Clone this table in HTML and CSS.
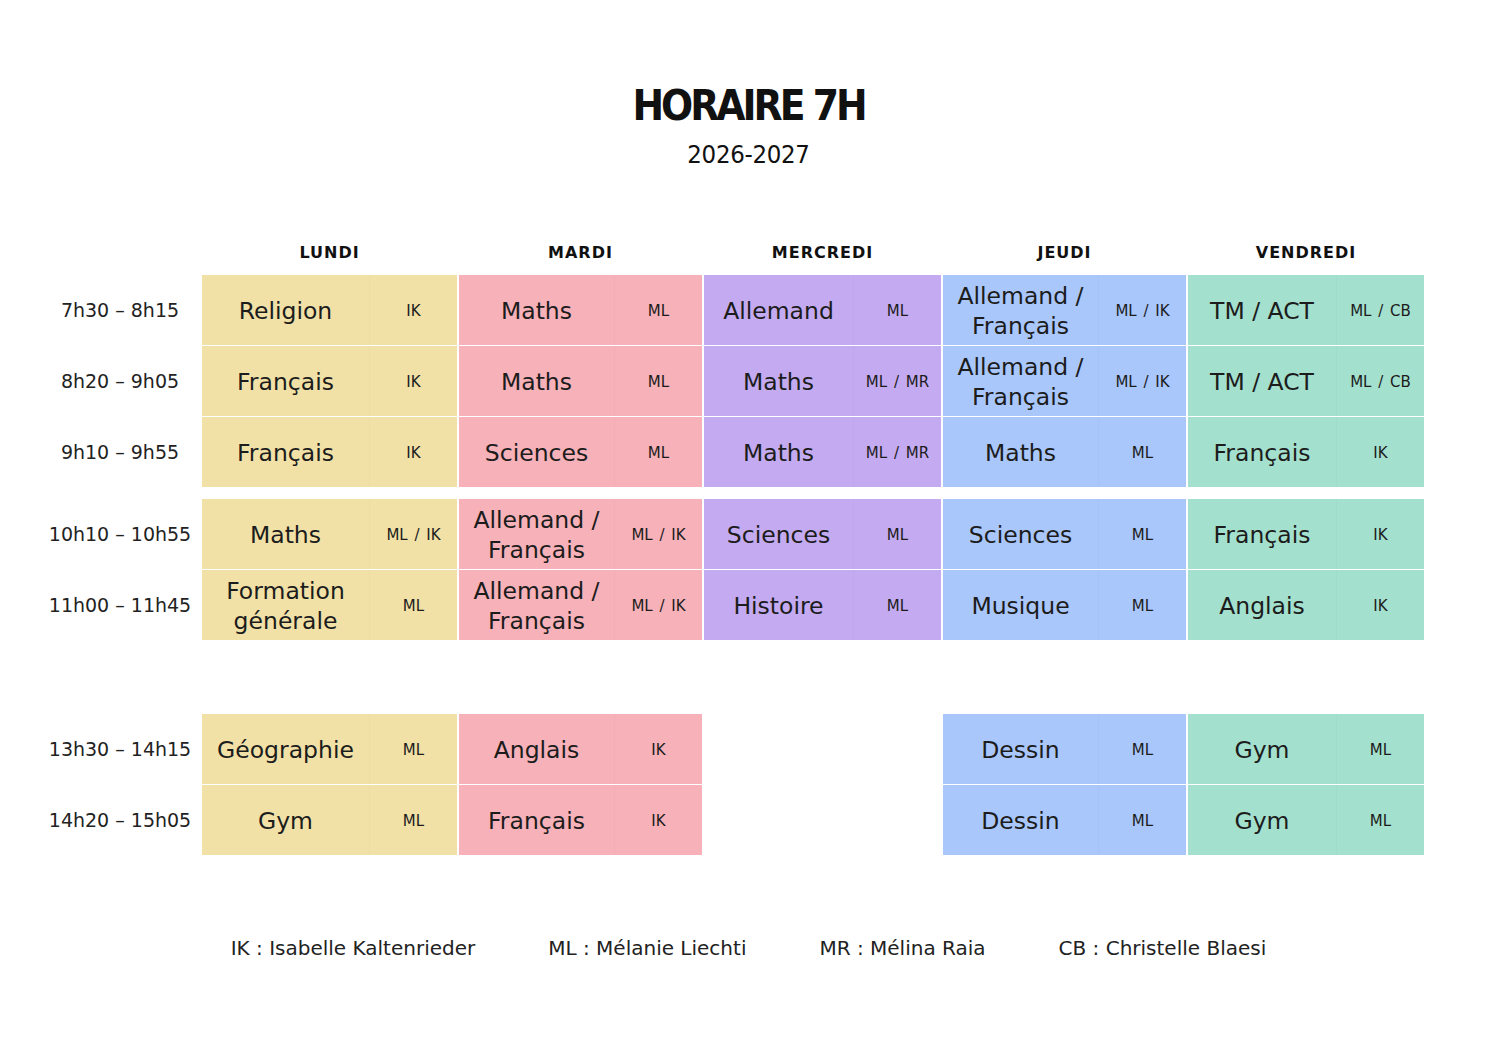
FILE: index.html
```html
<!DOCTYPE html>
<html lang="fr">
<head>
<meta charset="utf-8">
<title>Horaire 7H</title>
<link rel="stylesheet" href="styles.css">
</head>
<body>
<div class="page">
  <header class="title">
    <h1>HORAIRE 7H</h1>
    <p class="year">2026-2027</p>
  </header>

  <div class="schedule">
    <div class="row head">
      <div class="time"></div>
      <div class="day-h">LUNDI</div>
      <div class="day-h">MARDI</div>
      <div class="day-h">MERCREDI</div>
      <div class="day-h">JEUDI</div>
      <div class="day-h">VENDREDI</div>
    </div>

    <div class="block b1">
      <div class="row">
        <div class="time">7h30 – 8h15</div>
        <div class="cell lun"><span class="subj">Religion</span><span class="tch">IK</span></div>
        <div class="cell mar"><span class="subj">Maths</span><span class="tch">ML</span></div>
        <div class="cell mer"><span class="subj">Allemand</span><span class="tch">ML</span></div>
        <div class="cell jeu"><span class="subj">Allemand /<br>Français</span><span class="tch">ML / IK</span></div>
        <div class="cell ven"><span class="subj">TM / ACT</span><span class="tch">ML / CB</span></div>
      </div>
      <div class="row">
        <div class="time">8h20 – 9h05</div>
        <div class="cell lun"><span class="subj">Français</span><span class="tch">IK</span></div>
        <div class="cell mar"><span class="subj">Maths</span><span class="tch">ML</span></div>
        <div class="cell mer"><span class="subj">Maths</span><span class="tch">ML / MR</span></div>
        <div class="cell jeu"><span class="subj">Allemand /<br>Français</span><span class="tch">ML / IK</span></div>
        <div class="cell ven"><span class="subj">TM / ACT</span><span class="tch">ML / CB</span></div>
      </div>
      <div class="row">
        <div class="time">9h10 – 9h55</div>
        <div class="cell lun"><span class="subj">Français</span><span class="tch">IK</span></div>
        <div class="cell mar"><span class="subj">Sciences</span><span class="tch">ML</span></div>
        <div class="cell mer"><span class="subj">Maths</span><span class="tch">ML / MR</span></div>
        <div class="cell jeu"><span class="subj">Maths</span><span class="tch">ML</span></div>
        <div class="cell ven"><span class="subj">Français</span><span class="tch">IK</span></div>
      </div>
    </div>

    <div class="block b2">
      <div class="row">
        <div class="time">10h10 – 10h55</div>
        <div class="cell lun"><span class="subj">Maths</span><span class="tch">ML / IK</span></div>
        <div class="cell mar"><span class="subj">Allemand /<br>Français</span><span class="tch">ML / IK</span></div>
        <div class="cell mer"><span class="subj">Sciences</span><span class="tch">ML</span></div>
        <div class="cell jeu"><span class="subj">Sciences</span><span class="tch">ML</span></div>
        <div class="cell ven"><span class="subj">Français</span><span class="tch">IK</span></div>
      </div>
      <div class="row">
        <div class="time">11h00 – 11h45</div>
        <div class="cell lun"><span class="subj">Formation<br>générale</span><span class="tch">ML</span></div>
        <div class="cell mar"><span class="subj">Allemand /<br>Français</span><span class="tch">ML / IK</span></div>
        <div class="cell mer"><span class="subj">Histoire</span><span class="tch">ML</span></div>
        <div class="cell jeu"><span class="subj">Musique</span><span class="tch">ML</span></div>
        <div class="cell ven"><span class="subj">Anglais</span><span class="tch">IK</span></div>
      </div>
    </div>

    <div class="block b3">
      <div class="row">
        <div class="time">13h30 – 14h15</div>
        <div class="cell lun"><span class="subj">Géographie</span><span class="tch">ML</span></div>
        <div class="cell mar"><span class="subj">Anglais</span><span class="tch">IK</span></div>
        <div class="cell empty"></div>
        <div class="cell jeu"><span class="subj">Dessin</span><span class="tch">ML</span></div>
        <div class="cell ven"><span class="subj">Gym</span><span class="tch">ML</span></div>
      </div>
      <div class="row">
        <div class="time">14h20 – 15h05</div>
        <div class="cell lun"><span class="subj">Gym</span><span class="tch">ML</span></div>
        <div class="cell mar"><span class="subj">Français</span><span class="tch">IK</span></div>
        <div class="cell empty"></div>
        <div class="cell jeu"><span class="subj">Dessin</span><span class="tch">ML</span></div>
        <div class="cell ven"><span class="subj">Gym</span><span class="tch">ML</span></div>
      </div>
    </div>
  </div>

  <footer class="legend">
    <span>IK : Isabelle Kaltenrieder</span>
    <span>ML : Mélanie Liechti</span>
    <span>MR : Mélina Raia</span>
    <span>CB : Christelle Blaesi</span>
  </footer>
</div>
</body>
</html>
```

FILE: styles.css
```css
* { box-sizing: border-box; }

html, body {
  margin: 0;
  padding: 0;
  background: #ffffff;
}

body {
  font-family: "DejaVu Sans", "Liberation Sans", sans-serif;
  color: #1c1c1c;
}

.page {
  width: 1497px;
  padding-top: 81px;
}

.title {
  text-align: center;
}

.title h1 {
  margin: 0;
  font-family: "DejaVu Sans Condensed", "DejaVu Sans", sans-serif;
  font-stretch: condensed;
  font-weight: bold;
  font-size: 42px;
  line-height: 50px;
  letter-spacing: -3px;
  color: #111;
}

.year {
  margin: 7px 0 0;
  font-family: "DejaVu Sans Condensed", "DejaVu Sans", sans-serif;
  font-stretch: condensed;
  font-size: 25.5px;
  line-height: 32px;
  letter-spacing: -0.3px;
  color: #111;
}

.schedule {
  padding-left: 40px;
  margin-top: 67px;
}

.row {
  display: grid;
  grid-template-columns: 160px 255px 243px 237px 243px 236px;
  column-gap: 2px;
  height: 70px;
}

.row.head {
  height: 30px;
  margin-bottom: 8px;
}

.day-h {
  font-weight: bold;
  font-size: 16px;
  letter-spacing: 1px;
  display: flex;
  align-items: center;
  justify-content: center;
  color: #111;
}

.block {
  display: flex;
  flex-direction: column;
  gap: 1px;
}

.b2 { margin-top: 12px; }
.b3 { margin-top: 74px; }

.time {
  display: flex;
  align-items: center;
  justify-content: center;
  font-size: 19px;
  color: #222;
  white-space: nowrap;
}

.cell {
  display: flex;
  align-items: stretch;
}

.subj {
  flex: 1;
  display: flex;
  align-items: center;
  justify-content: center;
  text-align: center;
  font-size: 23.5px;
  line-height: 30px;
  padding-top: 2px;
}

.tch {
  width: 88px;
  display: flex;
  align-items: center;
  justify-content: center;
  font-size: 15px;
  word-spacing: 2px;
  padding-top: 2px;
  border-left: 1px solid rgba(0, 0, 0, 0.015);
}

.lun { background: #f1e1a7; }
.mar { background: #f6b1b9; }
.mer { background: #c4abf1; }
.jeu { background: #a9c7fb; }
.ven { background: #a4e0ce; }
.empty { background: transparent; }

.legend {
  margin-top: 78px;
  display: flex;
  justify-content: center;
  gap: 73px;
  font-size: 20px;
  line-height: 30px;
  color: #222;
}
```
